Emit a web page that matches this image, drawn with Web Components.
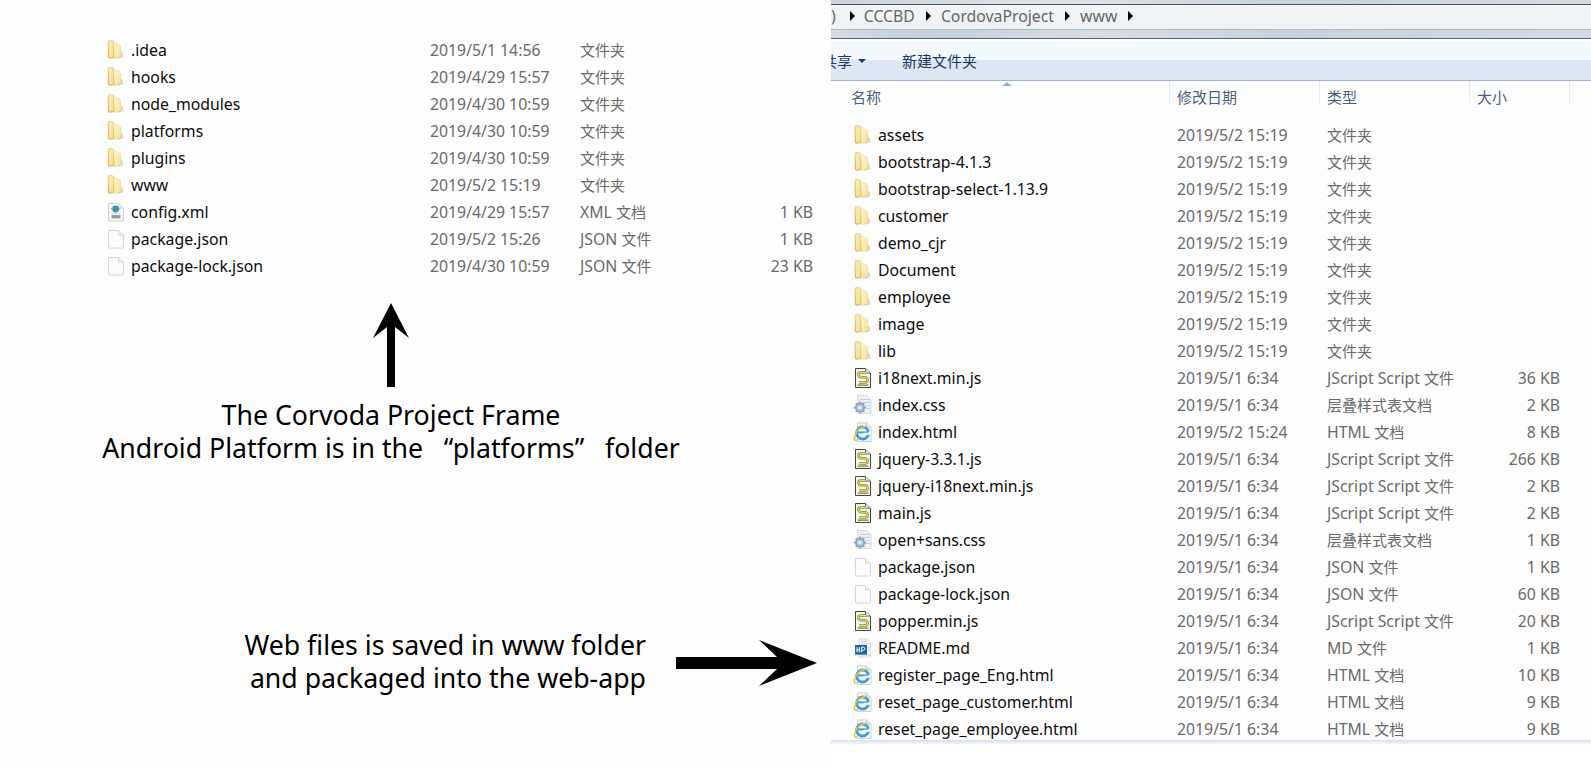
<!DOCTYPE html>
<html><head><meta charset="utf-8">
<style>
html,body{margin:0;padding:0;background:#fff}
body{width:1591px;height:768px;overflow:hidden;font-family:"Noto Sans","Noto Sans CJK SC",sans-serif}
</style></head>
<body>
<split-page>
  <left-panel slot="left">
    <file-list>
      <file-row icon="folder" name=".idea" date="2019/5/1 14:56" type="文件夹"></file-row>
      <file-row icon="folder" name="hooks" date="2019/4/29 15:57" type="文件夹"></file-row>
      <file-row icon="folder" name="node_modules" date="2019/4/30 10:59" type="文件夹"></file-row>
      <file-row icon="folder" name="platforms" date="2019/4/30 10:59" type="文件夹"></file-row>
      <file-row icon="folder" name="plugins" date="2019/4/30 10:59" type="文件夹"></file-row>
      <file-row icon="folder" name="www" date="2019/5/2 15:19" type="文件夹"></file-row>
      <file-row icon="xml" name="config.xml" date="2019/4/29 15:57" type="XML 文档" size="1 KB"></file-row>
      <file-row icon="blank" name="package.json" date="2019/5/2 15:26" type="JSON 文件" size="1 KB"></file-row>
      <file-row icon="blank" name="package-lock.json" date="2019/4/30 10:59" type="JSON 文件" size="23 KB"></file-row>
    </file-list>
  </left-panel>
  <explorer-window slot="right">
    <file-row icon="folder" name="assets" date="2019/5/2 15:19" type="文件夹"></file-row>
    <file-row icon="folder" name="bootstrap-4.1.3" date="2019/5/2 15:19" type="文件夹"></file-row>
    <file-row icon="folder" name="bootstrap-select-1.13.9" date="2019/5/2 15:19" type="文件夹"></file-row>
    <file-row icon="folder" name="customer" date="2019/5/2 15:19" type="文件夹"></file-row>
    <file-row icon="folder" name="demo_cjr" date="2019/5/2 15:19" type="文件夹"></file-row>
    <file-row icon="folder" name="Document" date="2019/5/2 15:19" type="文件夹"></file-row>
    <file-row icon="folder" name="employee" date="2019/5/2 15:19" type="文件夹"></file-row>
    <file-row icon="folder" name="image" date="2019/5/2 15:19" type="文件夹"></file-row>
    <file-row icon="folder" name="lib" date="2019/5/2 15:19" type="文件夹"></file-row>
    <file-row icon="js" name="i18next.min.js" date="2019/5/1 6:34" type="JScript Script 文件" size="36 KB"></file-row>
    <file-row icon="css" name="index.css" date="2019/5/1 6:34" type="层叠样式表文档" size="2 KB"></file-row>
    <file-row icon="ie" name="index.html" date="2019/5/2 15:24" type="HTML 文档" size="8 KB"></file-row>
    <file-row icon="js" name="jquery-3.3.1.js" date="2019/5/1 6:34" type="JScript Script 文件" size="266 KB"></file-row>
    <file-row icon="js" name="jquery-i18next.min.js" date="2019/5/1 6:34" type="JScript Script 文件" size="2 KB"></file-row>
    <file-row icon="js" name="main.js" date="2019/5/1 6:34" type="JScript Script 文件" size="2 KB"></file-row>
    <file-row icon="css" name="open+sans.css" date="2019/5/1 6:34" type="层叠样式表文档" size="1 KB"></file-row>
    <file-row icon="blank" name="package.json" date="2019/5/1 6:34" type="JSON 文件" size="1 KB"></file-row>
    <file-row icon="blank" name="package-lock.json" date="2019/5/1 6:34" type="JSON 文件" size="60 KB"></file-row>
    <file-row icon="js" name="popper.min.js" date="2019/5/1 6:34" type="JScript Script 文件" size="20 KB"></file-row>
    <file-row icon="md" name="README.md" date="2019/5/1 6:34" type="MD 文件" size="1 KB"></file-row>
    <file-row icon="ie" name="register_page_Eng.html" date="2019/5/1 6:34" type="HTML 文档" size="10 KB"></file-row>
    <file-row icon="ie" name="reset_page_customer.html" date="2019/5/1 6:34" type="HTML 文档" size="9 KB"></file-row>
    <file-row icon="ie" name="reset_page_employee.html" date="2019/5/1 6:34" type="HTML 文档" size="9 KB"></file-row>
  </explorer-window>
</split-page>
<script>
function define(tag, html, init){
  customElements.define(tag, class extends HTMLElement{
    constructor(){super();this.attachShadow({mode:'open'}).innerHTML=html;}
    connectedCallback(){ if(init) init.call(this,this.shadowRoot); }
  });
}
const defs=`
<linearGradient id="fb" x1="0" y1="0" x2="0" y2="1"><stop offset="0" stop-color="#f6e6a6"/><stop offset="1" stop-color="#dcb650"/></linearGradient>
<linearGradient id="ff" x1="0" y1="0" x2="1" y2="1"><stop offset="0" stop-color="#fefad8"/><stop offset="1" stop-color="#f6e08c"/></linearGradient>
<linearGradient id="fs" x1="0" y1="0" x2="1" y2="0"><stop offset="0" stop-color="#9c9c9c"/><stop offset="1" stop-color="#ececec"/></linearGradient>`;
const ICONS={
 folder:`<defs>${defs}</defs>
  <path d="M12 19.4 L18 18 L16.5 13.6 L12 12.6z" fill="url(#fs)" opacity=".85"/>
  <path d="M2 2.6 Q2 1.4 3.2 1.4 L6.4 1.4 L7.6 2.6 L9 18.4 L4 19.4 Q2.2 19.6 2 18z" fill="url(#fb)" stroke="#d4b057" stroke-width=".4"/>
  <path d="M3 3 L6.4 2.6 L7.4 18 L4 18.6 Q3 18.6 3 17.6z" fill="#f9edb8" opacity=".75"/>
  <path d="M7.6 3.4 L13.6 6 L14.4 6.6 L15.2 17 Q15.2 18 14.2 18.2 L9.4 19.6 Q8.4 19.8 8.3 18.6z" fill="url(#ff)" stroke="#dfc46c" stroke-width=".4"/>`,
 blank:`<path d="M2.5 2.5H12.5L17.5 7V19Q17.5 20 16.5 20H3.5Q2.5 20 2.5 19z" fill="#fbfbfb" stroke="#d6d6d6"/>
  <path d="M12.5 2.5V7H17.5" fill="#efefef" stroke="#d6d6d6"/>`,
 xml:`<path d="M2.5 2.5H12.5L17.5 7V19Q17.5 20 16.5 20H3.5Q2.5 20 2.5 19z" fill="#f8f8f8" stroke="#cfcfcf"/>
  <path d="M12.5 2.5V7H17.5" fill="#e8e8e8" stroke="#cfcfcf"/>
  <circle cx="9.6" cy="8" r="3.4" fill="#3f8fc9"/>
  <path d="M7.5 7 L10 5.8 L11 7.8 L9 10.2 L8 9z" fill="#3fa14a"/>
  <path d="M4.6 7.6 6 6.6V9zM14.6 7.6 13.2 6.6V9z" fill="#9aa"/>
  <rect x="5.5" y="14" width="9" height="3.4" fill="#9a9aa8"/>
  <rect x="5.5" y="12.2" width="9" height="1" fill="#d5d5dc"/>`,
 js:`<path d="M2.5 1.5H12.5L17.5 6V20.5H2.5z" fill="#f6f6ee" stroke="#444"/>
  <path d="M12.5 1.5V6H17.5" fill="#e6e6e0" stroke="#666"/>
  <path d="M13 5.5 H7.5 Q5.5 5.5 5.5 7.5 Q5.5 10 8.5 10.2 H12 Q14.5 10.5 14.5 13 Q14.5 15.5 12 15.5 H6" fill="none" stroke="#7f8a2a" stroke-width="2.6"/>
  <path d="M13 5.5 H7.5 Q5.5 5.5 5.5 7.5 Q5.5 10 8.5 10.2 H12 Q14.5 10.5 14.5 13 Q14.5 15.5 12 15.5 H6" fill="none" stroke="#e6df80" stroke-width="1.1"/>
  <rect x="4.5" y="17.4" width="11" height="1.6" fill="#9a9a4a"/>`,
 css:`<path d="M4.5 1.5H13.5L18 5.5V19.5H4.5z" fill="#eef2f6" stroke="#d6dbe2"/>
  <path d="M7 5.5H17M9 8.5H17M13 11.5H17M13 14.5H17" stroke="#c4d0dc"/>
  <g transform="translate(7 13.6)"><circle r="5" fill="#8fa7c0"/><path d="M0-6.2V6.2M-6.2 0H6.2M-4.3-4.3 4.3 4.3M-4.3 4.3 4.3-4.3" stroke="#8fa7c0" stroke-width="1.8"/><circle r="3.2" fill="#b8cadb"/><circle r="1.7" fill="#eef2f6"/></g>`,
 ie:`<path d="M4.5 2H13.5L18 6V20.5H4.5z" fill="#f7f7f7" stroke="#cdcdcd"/>
  <path d="M13.5 2V6H18" fill="#e8e8e8" stroke="#cdcdcd"/>
  <circle cx="9.6" cy="12" r="6" fill="none" stroke="#3aa0e6" stroke-width="2.8"/>
  <path d="M5 11.4H14.6" stroke="#3aa0e6" stroke-width="2"/>
  <path d="M10.5 12.8H16.6V10.6" stroke="#f7f7f7" stroke-width="2" fill="none"/>
  <path d="M13.5 5Q2.6 7 1.4 17.4Q1.4 20 4.4 18.6" fill="none" stroke="#f0c030" stroke-width="1.6"/>`,
 md:`<path d="M6 2H14L17.5 5.5V20H6z" fill="#f6f6f6" stroke="#dcdcdc"/>
  <path d="M8 4.5H14M8 7H17M14.5 10H17M14.5 13H17M8 18H17" stroke="#ced4da"/>
  <rect x="2" y="8" width="12" height="9.6" fill="#1f64a8"/>
  <path d="M4 10.2V15.4M4 12.8H6.4M6.4 10.2V15.4M8.6 15.4V10.2H10.4Q11.8 10.2 11.8 11.7Q11.8 13.2 10.4 13.2H8.6" stroke="#fff" stroke-width="1" fill="none"/>`
};
define('split-page',`<style>:host{display:grid;grid-template-columns:831px 760px;width:1591px;height:768px;overflow:hidden}</style><slot name="left"></slot><slot name="right"></slot>`);
define('file-icon',`<style>:host{display:block;width:20px;height:22px;margin:1px 0 0 -1px}svg{display:block}</style><svg width="20" height="22" viewBox="0 0 20 22"></svg>`,function(r){
  r.querySelector('svg').innerHTML=ICONS[this.getAttribute('kind')]||'';
});
define('file-row',`<style>
:host{display:grid;grid-template-columns:24px 299px 150px 130px 103px;height:27px;align-items:center;font-size:15.8px;color:#6a6a6a;white-space:nowrap}
.n{color:#0c0c0c}.s{text-align:right}.c{font-size:15px}
</style><span class="n"></span><span class="d"></span><span class="t"></span><span class="s"></span>`,function(r){
  if(!r.querySelector('file-icon')){
    const ic=document.createElement('file-icon');
    ic.setAttribute('kind',this.getAttribute('icon'));
    r.insertBefore(ic,r.querySelector('.n'));
  }
  r.querySelector('.n').textContent=this.getAttribute('name');
  r.querySelector('.d').textContent=this.getAttribute('date');
  r.querySelector('.t').innerHTML=this.getAttribute('type').replace(/[\u4e00-\u9fff]+/g,'<span class="c">$&</span>');
  r.querySelector('.s').textContent=this.getAttribute('size')||'';
});
define('file-list',`<style>:host{display:block;padding:36px 0 0 107px}</style><slot></slot>`);
define('big-note',`<style>:host{display:block;font-size:26.7px;color:#000;white-space:pre;line-height:32.5px}</style><slot></slot>`);
define('up-arrow',`<style>:host{display:block;width:40px;height:84px}svg{display:block}</style>
<svg width="40" height="84" viewBox="0 0 40 84"><path d="M20 0 L38 35 L24 24 V84 H16 V24 L2 35z" fill="#000"/></svg>`);
define('right-arrow',`<style>:host{display:block;width:141px;height:46px}svg{display:block}</style>
<svg width="141" height="46" viewBox="0 0 141 46"><path d="M0 17 H101 L83 0 L141 23 L83 46 L101 29 H0z" fill="#000"/></svg>`);
define('left-panel',`<style>
:host{display:flex;flex-direction:column;background:#fdfdfd;height:768px}
.frame{display:flex;flex-direction:column;align-items:center;width:782px;margin-top:24px}
.frame big-note{text-align:center;margin-top:12px}
.web{display:flex;align-items:center;margin-top:165px;padding-left:243px}
.web big-note{text-align:right;width:403px}
.web right-arrow{margin-left:30px;margin-top:2px;flex:none}
</style>
<slot></slot>
<div class="frame"><up-arrow></up-arrow><big-note>The Corvoda Project Frame
Android Platform is in the   “platforms”   folder</big-note></div>
<div class="web"><big-note>Web files is saved in www folder
and packaged into the web-app</big-note><right-arrow></right-arrow></div>`);
define('explorer-window',`<style>
:host{display:flex;flex-direction:column;height:768px;overflow:hidden;background:#fff;font-size:15px}
.top{height:4px;background:linear-gradient(90deg,#ccd3dc,#dfe3e8 30%,#c9d2dd 60%,#d5dbe3)}
.crumbs{height:22px;padding-bottom:2px;border-top:1px solid #4e5257;border-bottom:1px solid #b4b8bb;background:linear-gradient(#f3f4f6,#eef1f5);display:flex;align-items:center;color:#666;font-size:15.8px}
.tri{width:0;height:0;border-left:5px solid #000;border-top:5px solid transparent;border-bottom:5px solid transparent;flex:none}
.crumbs span{flex:none}
.band{height:8px;background:linear-gradient(90deg,#d4dce6,#c5d0dc 12%,#d6dde6 35%,#c8d3df 60%,#d2dbe5)}
.dark{height:1px;background:#5b6066}
.tool{height:39px;border-top:2px solid #fff;display:flex;align-items:center;color:#1e395b;background:linear-gradient(#f2f8fe,#f4f9ff 48%,#dde7f5 50%,#dbe6f4);border-bottom:1px solid #a3b3cb;overflow:hidden;white-space:nowrap}
.drop{width:0;height:0;border-top:4px solid #1e395b;border-left:4px solid transparent;border-right:4px solid transparent;margin-left:6px}
.head{height:27px;flex:none;display:flex;position:relative;color:#4c607a;background:#fdfdfd;line-height:33px}
.head span{box-sizing:border-box;padding-left:7px;flex:none;border-right:1px solid;border-image:linear-gradient(#dfe7f2,#e7edf5 75%,#fdfdfd) 1}
.sort{position:absolute;left:171px;top:1px;width:0;height:0;border-bottom:4px solid #8fb3d6;border-left:5px solid transparent;border-right:5px solid transparent}
.list{flex:none;height:632px;padding:13px 0 0 23px;box-sizing:border-box;background:#fdfdfd;overflow:hidden}
.foot{flex:none;height:4px;background:linear-gradient(#d6e0f0,#f3f6fb)}
.rest{flex:1;background:#fff}
</style>
<div class="top"></div>
<div class="crumbs">
  <span>)</span><div class="tri" style="margin-left:14px"></div>
  <span style="margin-left:9px">CCCBD</span><div class="tri" style="margin-left:11px"></div>
  <span style="margin-left:10px">CordovaProject</span><div class="tri" style="margin-left:11px"></div>
  <span style="margin-left:10px">www</span><div class="tri" style="margin-left:11px"></div>
</div>
<div class="band"></div><div class="dark"></div>
<div class="tool"><span style="margin-left:-9px">共享</span><div class="drop"></div><span style="margin-left:36px">新建文件夹</span></div>
<div class="head">
  <span style="width:339px;padding-left:20px">名称</span><span style="width:150px">修改日期</span><span style="width:150px">类型</span><span style="width:100px">大小</span>
  <div class="sort"></div>
</div>
<div class="list"><slot></slot></div>
<div class="foot"></div><div class="rest"></div>`);
</script>
</body></html>
